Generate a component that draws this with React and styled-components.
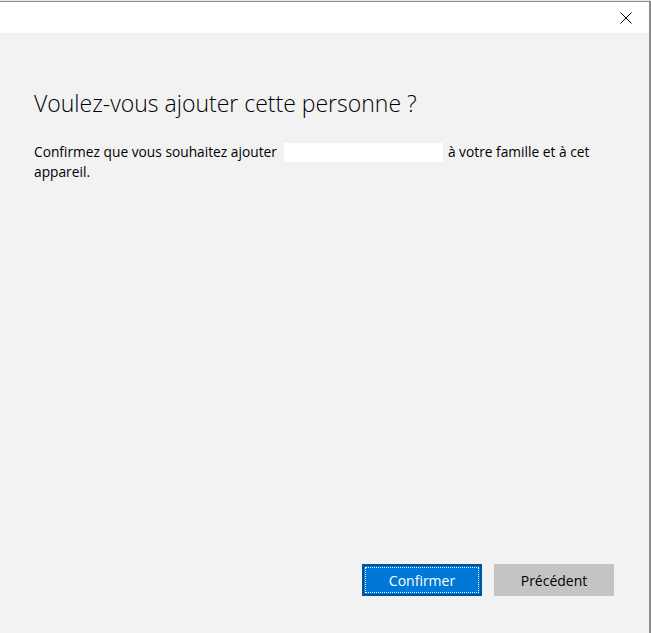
import React from "react";
import styled, { createGlobalStyle } from "styled-components";

const Global = createGlobalStyle`
  html, body { margin: 0; padding: 0; background: #ffffff; }
  body { font-family: "Open Sans", "Noto Sans", sans-serif; }
`;

const Screen = styled.div`
  width: 651px;
  height: 633px;
  display: flex;
  flex-direction: column;
  background: #ffffff;
  overflow: hidden;
`;

const BackdropStrip = styled.div`
  height: 1px;
  background: #e6e6e6;
  flex: none;
`;

const Window = styled.div`
  flex: 1;
  display: flex;
  flex-direction: column;
  border-top: 1px solid #8c8c8c;
  border-right: 2px solid #8c8c8c;
  min-height: 0;
`;

const TitleBar = styled.div`
  height: 31px;
  flex: none;
  background: #ffffff;
  display: flex;
  justify-content: flex-end;
  align-items: center;
`;

const CloseButton = styled.button`
  width: 46px;
  height: 31px;
  border: none;
  background: transparent;
  display: flex;
  align-items: center;
  justify-content: center;
  padding: 0;
`;

const Content = styled.div`
  flex: 1;
  background: #f2f2f2;
  display: flex;
  flex-direction: column;
  padding: 55px 35px 37px 34px;
`;

const Heading = styled.h1`
  margin: 0;
  font-family: "Open Sans", sans-serif;
  font-weight: 300;
  font-size: 23px;
  line-height: 30px;
  color: #000000;
`;

const Message = styled.p`
  margin: 24px 0 0 0;
  font-family: "Open Sans", sans-serif;
  font-size: 13.75px;
  line-height: 20px;
  color: #000000;
  max-width: 570px;
`;

const Redacted = styled.span`
  display: inline-block;
  width: 159px;
  height: 19px;
  background: #ffffff;
  vertical-align: -5px;
  margin: 0 5px 0 7px;
`;

const Spacer = styled.div`
  flex: 1;
`;

const Actions = styled.div`
  display: flex;
  justify-content: flex-end;
  gap: 12px;
`;

const ActionButton = styled.button`
  width: 120px;
  height: 32px;
  box-sizing: border-box;
  font-family: "Open Sans", sans-serif;
  font-size: 14px;
  padding: 0;
  border: 2px solid ${(p) => (p.$primary ? "#005499" : "#c4c4c4")};
  background: ${(p) => (p.$primary ? "#0078d7" : "#c4c4c4")};
  color: ${(p) => (p.$primary ? "#ffffff" : "#000000")};
  outline: ${(p) => (p.$primary ? "1px dotted #ffffff" : "none")};
  outline-offset: -4px;
`;

export default function App() {
  return (
    <>
      <Global />
      <Screen>
        <BackdropStrip />
        <Window>
          <TitleBar>
            <CloseButton aria-label="Fermer">
              <svg width="12" height="12" viewBox="0 0 12 12">
                <path d="M0.5 0.5 L11.5 11.5 M11.5 0.5 L0.5 11.5" stroke="#000" strokeWidth="1" fill="none" />
              </svg>
            </CloseButton>
          </TitleBar>
          <Content>
            <Heading>Voulez-vous ajouter cette personne ?</Heading>
            <Message>
              Confirmez que vous souhaitez ajouter
              <Redacted />à votre famille et à cet appareil.
            </Message>
            <Spacer />
            <Actions>
              <ActionButton $primary>Confirmer</ActionButton>
              <ActionButton>Précédent</ActionButton>
            </Actions>
          </Content>
        </Window>
      </Screen>
    </>
  );
}
